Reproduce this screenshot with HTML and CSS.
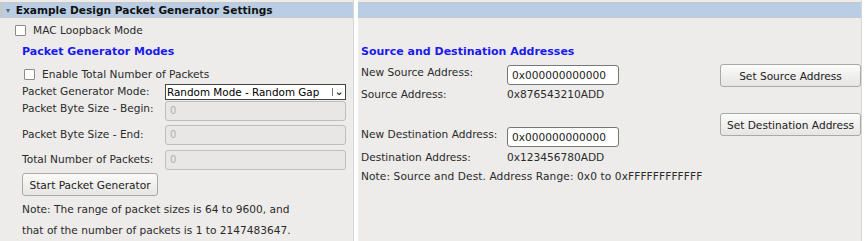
FILE: index.html
```html
<!DOCTYPE html>
<html>
<head>
    <title>Packet Generator Settings</title>
    <link rel="stylesheet" href="styles.css">
</head>
<body>

<div class="panel left-panel">
    <div class="panel-header"><span class="arrow">&#9662;</span> Example Design Packet Generator Settings</div>
    <div class="panel-body">
        <label class="check-row top-check"><span class="box"></span> MAC Loopback Mode</label>
        <h3 class="section-title">Packet Generator Modes</h3>
        <label class="check-row inner-check"><span class="box"></span> Enable Total Number of Packets</label>
        <div class="form-grid">
            <div class="lbl">Packet Generator Mode:</div>
            <div class="select"><span>Random Mode - Random Gap</span><span class="caret">&#8964;</span></div>
            <div class="lbl">Packet Byte Size - Begin:</div>
            <div class="field disabled">0</div>
            <div class="lbl shifted">Packet Byte Size - End:</div>
            <div class="field disabled">0</div>
            <div class="lbl shifted">Total Number of Packets:</div>
            <div class="field disabled">0</div>
        </div>
        <button class="btn start-btn">Start Packet Generator</button>
        <p class="note first-note">Note: The range of packet sizes is 64 to 9600, and</p>
        <p class="note">that of the number of packets is 1 to 2147483647.</p>
    </div>
</div>

<div class="panel right-panel">
    <div class="panel-header"></div>
    <div class="panel-body">
        <h3 class="section-title addr-title">Source and Destination Addresses</h3>
        <div class="addr-group">
            <div class="addr-row">
                <div class="lbl">New Source Address:</div>
                <div class="field">0x000000000000</div>
                <button class="btn set-btn">Set Source Address</button>
            </div>
            <div class="addr-row value-row">
                <div class="lbl">Source Address:</div>
                <div class="value">0x876543210ADD</div>
            </div>
        </div>
        <div class="addr-group dest-group">
            <div class="addr-row">
                <div class="lbl">New Destination Address:</div>
                <div class="field">0x000000000000</div>
                <button class="btn set-btn dest-btn">Set Destination Address</button>
            </div>
            <div class="addr-row value-row">
                <div class="lbl">Destination Address:</div>
                <div class="value">0x123456780ADD</div>
            </div>
        </div>
        <p class="note addr-note">Note: Source and Dest. Address Range: 0x0 to 0xFFFFFFFFFFFF</p>
    </div>
</div>

</body>
</html>
```

FILE: styles.css
```css
body {
    font-family: "DejaVu Sans", Verdana, sans-serif;
    font-size: 10.6px;
    color: #2a2a2a;
    background-color: #ffffff;
    margin: 0;
    padding: 0;
    display: flex;
    gap: 4px;
    height: 241px;
    overflow: hidden;
}
.panel {
    background-color: #edecea;
    border-right: 1px solid #d6d6d6;
    height: 241px;
    box-sizing: border-box;
}
.left-panel {
    width: 354px;
}
.right-panel {
    width: 504px;
}
.panel-header {
    height: 14px;
    margin-top: 2px;
    border-top: 1px solid #c8c8c8;
    border-bottom: 1px solid #c8c8c8;
    background-color: #b9cee4;
    font-weight: bold;
    font-size: 10.6px;
    line-height: 14px;
    color: #111;
    padding-left: 4px;
    white-space: nowrap;
}
.arrow {
    font-size: 8px;
    color: #666;
    vertical-align: 1px;
    margin-right: 2px;
}
.left-panel .panel-header {
    border-left: 2px solid #c8c8c8;
}
.panel-body {
    padding: 0 0 0 22px;
}
.check-row {
    display: flex;
    align-items: center;
    gap: 7px;
    height: 14px;
}
.box {
    width: 9px;
    height: 9px;
    border: 1px solid #8a8a8a;
    background-color: #fff;
    border-radius: 1px;
}
.top-check {
    margin: 5px 0 0 -7px;
}
.section-title {
    color: #1a1aee;
    font-size: 11px;
    font-weight: bold;
    margin: 8px 0 9px 0;
}
.inner-check {
    margin-left: 2px;
    margin-bottom: 3px;
}
.form-grid {
    display: grid;
    grid-template-columns: 143px 181px;
    grid-template-rows: 17px 24px 25px 20px;
    align-items: start;
}
.form-grid .lbl {
    line-height: 14px;
}
.form-grid .lbl.shifted {
    padding-top: 2px;
}
.select {
    display: flex;
    justify-content: space-between;
    align-items: center;
    height: 14px;
    border: 1px solid #444;
    background-color: #fff;
    color: #000;
    font-size: 10.4px;
    padding-left: 1px;
    white-space: nowrap;
}
.caret {
    border-left: 1px solid #777;
    width: 12px;
    text-align: center;
    line-height: 8px;
    font-size: 11px;
}
.field {
    height: 18px;
    line-height: 18px;
    border: 1px solid #999;
    border-radius: 3px;
    background-color: #fff;
    padding-left: 4px;
    color: #222;
    white-space: nowrap;
}
.field.disabled {
    background-color: #e8e7e5;
    border-color: #bdbdbd;
    color: #b0b0b0;
    font-size: 10px;
}
.btn {
    font-family: "DejaVu Sans", Verdana, sans-serif;
    font-size: 10.6px;
    color: #222;
    background: linear-gradient(#fbfbfa, #e6e5e3);
    border: 1px solid #a9a9a9;
    border-radius: 3px;
    height: 23px;
    padding: 0;
    white-space: nowrap;
    cursor: pointer;
}
.start-btn {
    display: block;
    margin-top: 3px;
    width: 136px;
}
.note {
    margin: 0;
    line-height: 21px;
    white-space: nowrap;
}
.first-note {
    margin-top: 3px;
}
.right-panel .panel-body {
    padding-left: 3px;
}
.addr-title {
    margin-top: 27px;
    margin-bottom: 7px;
}
.addr-row {
    display: flex;
    align-items: flex-start;
    height: 22px;
}
.addr-row .lbl {
    width: 146px;
    line-height: 14px;
}
.addr-row .field {
    width: 106px;
    border-color: #777;
}
.value-row {
    height: 14px;
}
.value {
    width: 120px;
    line-height: 14px;
}
.set-btn {
    margin-left: auto;
    width: 141px;
    margin-top: -1px;
}
.dest-group {
    margin-top: 26px;
}
.dest-btn {
    margin-top: -14px;
}
.addr-group + .addr-group .value-row {
    margin-top: 1px;
}
.addr-note {
    line-height: 19px;
    margin-top: 3px;
    letter-spacing: 0.1px;
}
```
